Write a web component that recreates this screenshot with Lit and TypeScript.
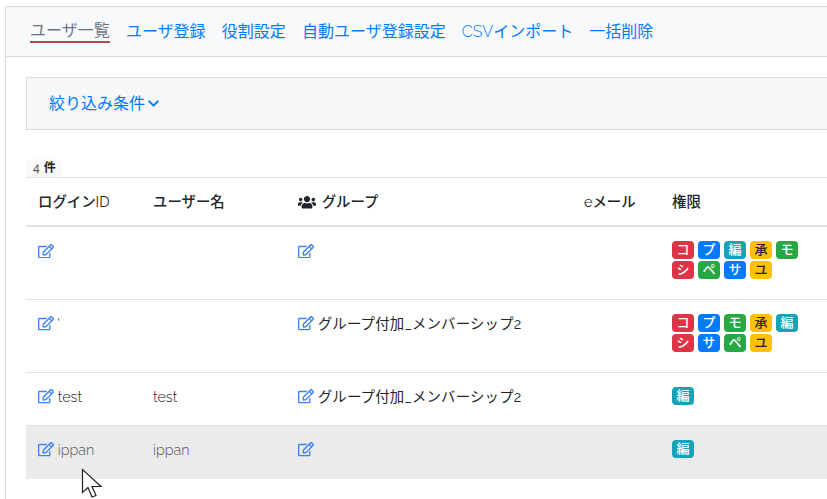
import { LitElement, html, css, svg } from "lit";
import { customElement } from "lit/decorators.js";

const edit = html`<svg class="edit" viewBox="0 0 576 512" aria-hidden="true"><path fill="currentColor" d="M402.3 344.9l32-32c5-5 13.7-1.5 13.7 5.7V464c0 26.5-21.5 48-48 48H48c-26.5 0-48-21.5-48-48V112c0-26.5 21.5-48 48-48h273.5c7.1 0 10.7 8.6 5.7 13.7l-32 32c-1.5 1.5-3.5 2.3-5.7 2.3H48v352h352V350.5c0-2.1.8-4.1 2.3-5.6zm156.6-201.8L296.3 405.7l-90.4 10c-26.2 2.9-48.5-19.2-45.6-45.6l10-90.4L432.9 17.1c22.9-22.9 59.9-22.9 82.7 0l43.2 43.2c22.9 22.9 22.9 60 .1 82.8zM460.1 174L402 115.9 216.2 301.8l-7.3 65.3 65.3-7.3L460.1 174zm64.8-79.7l-43.2-43.2c-4.1-4.1-10.8-4.1-14.8 0L436 82l58.1 58.1 30.9-30.9c4-4.2 4-10.8-.1-14.9z"/></svg>`;

const users = html`<svg class="users" viewBox="0 0 640 512" aria-hidden="true"><path fill="currentColor" d="M96 224c35.3 0 64-28.7 64-64s-28.7-64-64-64-64 28.7-64 64 28.7 64 64 64zm448 0c35.3 0 64-28.7 64-64s-28.7-64-64-64-64 28.7-64 64 28.7 64 64 64zm32 32h-64c-17.6 0-33.5 7.1-45.1 18.6 40.3 22.1 68.9 62 75.1 109.4h66c17.7 0 32-14.3 32-32v-32c0-35.3-28.7-64-64-64zm-256 0c61.9 0 112-50.1 112-112S381.9 32 320 32 208 82.1 208 144s50.1 112 112 112zm76.8 32h-8.3c-20.8 10-43.9 16-68.5 16s-47.6-6-68.5-16h-8.3C179.6 288 128 339.6 128 403.2V432c0 26.5 21.5 48 48 48h288c26.5 0 48-21.5 48-48v-28.8c0-63.6-51.6-115.2-115.2-115.2zm-223.7-13.4C161.5 263.1 145.6 256 128 256H64c-35.3 0-64 28.7-64 64v32c0 17.7 14.3 32 32 32h65.9c6.3-47.4 34.9-87.3 75.2-109.4z"/></svg>`;

const chevron = html`<svg class="chev" viewBox="0 0 448 512" aria-hidden="true"><path fill="currentColor" d="M207.029 381.476L12.686 187.132c-9.373-9.373-9.373-24.569 0-33.941l22.667-22.667c9.357-9.357 24.522-9.375 33.901-.04L224 284.505l154.745-154.021c9.379-9.335 24.544-9.317 33.901.04l22.667 22.667c9.373 9.373 9.373 24.569 0 33.941L240.971 381.476c-9.373 9.372-24.569 9.372-33.942 0z"/></svg>`;

type B = [string, string];
const R = "danger", P = "primary", I = "info", W = "warning", S = "success";
const perm1: B[] = [["コ", R], ["プ", P], ["編", I], ["承", W], ["モ", S], ["シ", R], ["ペ", S], ["サ", P], ["ユ", W]];
const perm2: B[] = [["コ", R], ["プ", P], ["モ", S], ["承", W], ["編", I], ["シ", R], ["サ", P], ["ペ", S], ["ユ", W]];
const perm3: B[] = [["編", I]];
const GROUP = "グループ付加_メンバーシップ2";
const rows = [
  { id: "", name: "", group: "", perms: perm1, cls: "tall first" },
  { id: "'", name: "", group: GROUP, perms: perm2, cls: "tall" },
  { id: "test", name: "test", group: GROUP, perms: perm3, cls: "" },
  { id: "ippan", name: "ippan", group: "", perms: perm3, cls: "hover" },
];

@customElement("app-root")
export class AppRoot extends LitElement {
  static styles = css`
    :host {
      display: block;
      position: relative;
      width: 827px;
      height: 499px;
      overflow: hidden;
      background: #fff;
      color: #212529;
      font-family: Raleway, Lato, "Noto Sans CJK JP", sans-serif;
      font-size: 14.4px;
      font-weight: 300;
    }
    .frame {
      margin: 6px 0 0 5px;
      height: 493px;
      box-sizing: border-box;
      border-top: 1px solid #dcdcdc;
      border-left: 1px solid #dcdcdc;
    }
    .nav {
      display: flex;
      gap: 16.2px;
      height: 50px;
      box-sizing: border-box;
      padding: 13px 0 0 24px;
      background: #f8f9fa;
      border-bottom: 1px solid #d8d8d8;
      font-size: 16px;
      font-weight: 400;
      line-height: 24px;
    }
    .tab { color: #007bff; white-space: nowrap; }
    .tab.active {
      color: #6c757d;
      height: 21px;
      line-height: 22px;
      border-bottom: 2px solid #b04a4a;
    }
    .thin { font-weight: 300; }
    .body { padding: 20px 0 0 20px; }
    .filter {
      height: 53px;
      box-sizing: border-box;
      padding-left: 22px;
      background: #f7f7f7;
      border: 1px solid #dcdcdc;
      border-right: 0;
      color: #007bff;
      font-size: 16px;
      font-weight: 400;
      line-height: 24px;
      display: flex;
      align-items: center;
    }
    .chev { width: 11px; height: 13px; margin-left: 3px; }
    .countwrap { height: 47px; }
    .count {
      display: inline-block;
      margin-top: 29px;
      vertical-align: top;
      height: 18px;
      padding: 0 7px;
      background: #f8f9fa;
      border-radius: 8px 8px 0 0;
      font-size: 12px;
      line-height: 19px;
      font-weight: 700;
    }
    .count .n { font-weight: 500; color: #555; margin-right: 4px; }
    table {
      width: 801px;
      table-layout: fixed;
      border-collapse: collapse;
      border-top: 1px solid #dee2e6;
    }
    th {
      height: 48px;
      box-sizing: border-box;
      padding: 0 12px 1px;
      text-align: left;
      font-weight: 500;
      font-size: 14.4px;
      border-bottom: 2px solid #dee2e6;
      vertical-align: middle;
      white-space: nowrap;
    }
    th .latin { font-weight: 400; }
    td {
      height: 53px;
      box-sizing: border-box;
      padding: 13px 12px 0;
      vertical-align: top;
      border-bottom: 1px solid #dee2e6;
      line-height: 21.6px;
      white-space: nowrap;
    }
    tr.tall td { height: 73px; }
    tr.first td { height: 74px; padding-top: 14px; }
    tr.hover td { background: #ebebeb; border-bottom: 0; color: #555; }
    .edit { width: 16px; height: 14.4px; color: #3b82f6; vertical-align: -1.5px; }
    .users { width: 18px; height: 14.4px; vertical-align: -2px; margin-right: 2px; }
    .jp { font-weight: 400; letter-spacing: 0.2px; }
    td.perm { padding-top: 14px; }
    tr.first td.perm { padding-top: 14px; }
    .badges { display: flex; flex-wrap: wrap; gap: 2px 4px; width: 130px; }
    .b {
      width: 22px;
      height: 18px;
      border-radius: 4px;
      text-align: center;
      font-size: 13px;
      line-height: 17px;
      font-weight: 500;
      color: #fff;
    }
    .danger { background: #dc3545; }
    .primary { background: #007bff; }
    .info { background: #17a2b8; }
    .warning { background: #ffc107; color: #212529; }
    .success { background: #28a745; }
    .cursor { position: absolute; left: 81px; top: 468px; width: 22px; height: 31px; }
  `;

  render() {
    return html`
      <div class="frame">
        <div class="nav">
          <span class="tab active">ユーザ一覧</span>
          <span class="tab">ユーザ登録</span>
          <span class="tab">役割設定</span>
          <span class="tab">自動ユーザ登録設定</span>
          <span class="tab"><span class="thin">CSV</span>インポート</span>
          <span class="tab">一括削除</span>
        </div>
        <div class="body">
          <div class="filter">絞り込み条件${chevron}</div>
          <div class="countwrap"><span class="count"><span class="n">4</span>件</span></div>
          <table>
            <colgroup>
              <col style="width:115px" /><col style="width:145px" /><col style="width:286px" /><col style="width:88px" /><col />
            </colgroup>
            <thead>
              <tr>
                <th>ログイン<span class="latin">ID</span></th>
                <th>ユーザー名</th>
                <th>${users} グループ</th>
                <th><span class="latin">e</span>メール</th>
                <th>権限</th>
              </tr>
            </thead>
            <tbody>
              ${rows.map(
                (r) => html`<tr class=${r.cls}>
                  <td>${edit} ${r.id}</td>
                  <td>${r.name}</td>
                  <td>${edit} <span class="jp">${r.group}</span></td>
                  <td></td>
                  <td class="perm">
                    <div class="badges">
                      ${r.perms.map(([t, c]) => html`<span class="b ${c}">${t}</span>`)}
                    </div>
                  </td>
                </tr>`
              )}
            </tbody>
          </table>
        </div>
      </div>
      <svg class="cursor" viewBox="0 0 22 31" aria-hidden="true">
        ${svg`<path d="M1.5 1.5V24.5L7 19.5L11 29L15 27.5L11 18.5H20Z" fill="#fff" stroke="#222" stroke-width="1.2" stroke-linejoin="miter"/>`}
      </svg>
    `;
  }
}
